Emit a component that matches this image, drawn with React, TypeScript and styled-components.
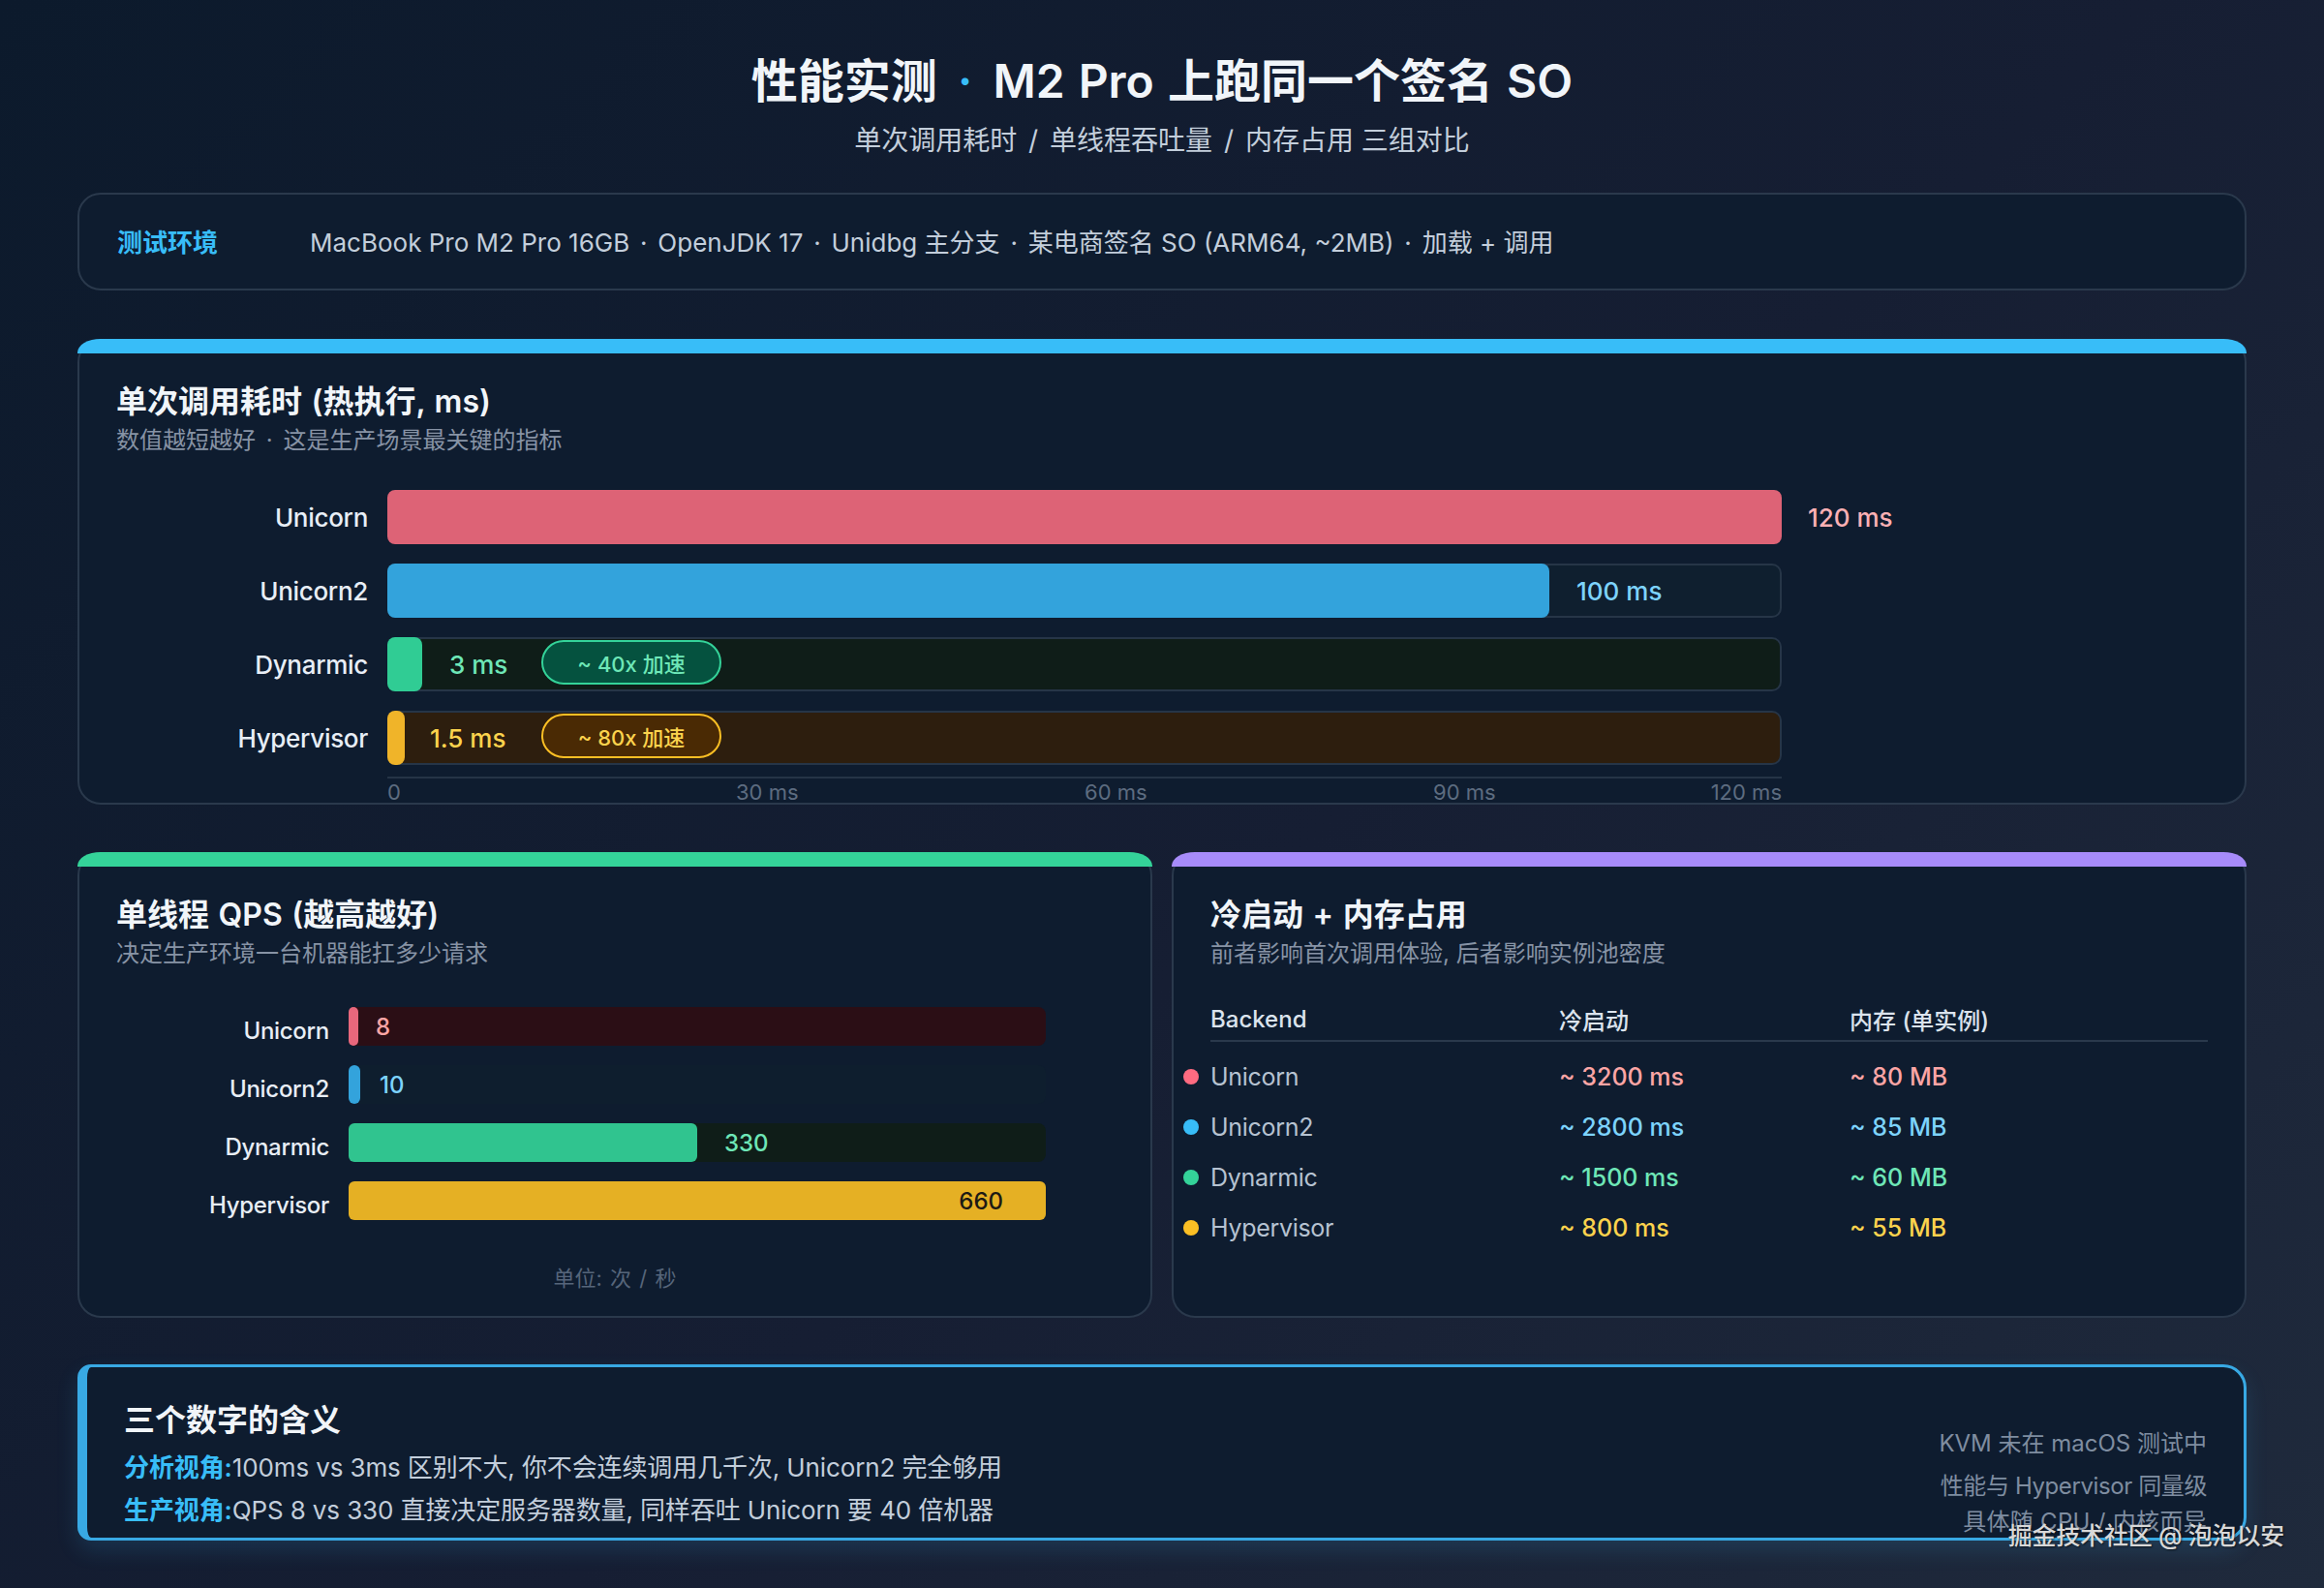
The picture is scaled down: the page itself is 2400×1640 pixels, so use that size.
import React from "react";
import styled, { createGlobalStyle } from "styled-components";

const Global = createGlobalStyle`
  html, body { margin: 0; padding: 0; }
  body {
    width: 2400px;
    height: 1640px;
    overflow: hidden;
    font-family: "Inter", "Noto Sans CJK SC", sans-serif;
    background: linear-gradient(135deg, #0c1a2c 0%, #161e33 55%, #1f2a3c 100%);
  }
`;

const Page = styled.div`
  position: relative;
  box-sizing: border-box;
  width: 2400px;
  height: 1640px;
  padding: 53px 80px 0;
  display: flex;
  flex-direction: column;
`;

const Header = styled.header`
  text-align: center;
  height: 111px;
`;

const Title = styled.h1`
  margin: 0;
  font-size: 48px;
  line-height: 62px;
  font-weight: 600;
  word-spacing: 2px;
  color: #f1f5f9;
`;

const Sep = styled.span<{ $space: number; $color?: string }>`
  margin: 0 ${(p) => p.$space}px;
  color: ${(p) => p.$color ?? "inherit"};
`;

const Subtitle = styled.p`
  margin: 10px 0 0;
  font-size: 28px;
  line-height: 40px;
  font-weight: 400;
  color: #c3cedb;
`;

const EnvCard = styled.section`
  box-sizing: border-box;
  margin-top: 35px;
  height: 101px;
  padding: 0 39px 2px;
  display: flex;
  align-items: center;
  background: #0e1c2f;
  border: 2px solid #2a394c;
  border-radius: 24px;
`;

const EnvLabel = styled.span`
  width: 199px;
  font-size: 26px;
  font-weight: 600;
  color: #38bdf8;
`;

const EnvText = styled.span`
  font-size: 26px;
  color: #c3cedb;
`;

const Card = styled.section<{ $accent: string; $height: number }>`
  position: relative;
  box-sizing: border-box;
  height: ${(p) => p.$height}px;
  padding: 43px 38px 0;
  background: #0e1c2f;
  border: 2px solid #2a394c;
  border-radius: 24px;
  &::before {
    content: "";
    position: absolute;
    left: -2px;
    right: -2px;
    top: -2px;
    height: 15px;
    border-radius: 24px 24px 0 0 / 14px 14px 0 0;
    background: ${(p) => p.$accent};
  }
`;

const WideCard = styled(Card)`
  margin-top: 50px;
`;

const CardTitle = styled.h2`
  margin: 0;
  font-size: 32px;
  line-height: 40px;
  font-weight: 600;
  word-spacing: 1.5px;
  color: #f1f5f9;
`;

const CardSub = styled.p`
  margin: 4px 0 0;
  font-size: 24px;
  line-height: 32px;
  color: #8793a5;
`;

const Chart = styled.div`
  margin-top: 35px;
  display: flex;
  flex-direction: column;
  gap: 20px;
`;

const BarRow = styled.div`
  display: grid;
  grid-template-columns: 260px 1440px auto;
  column-gap: 20px;
  align-items: center;
  height: 56px;
`;

const BarLabel = styled.span`
  text-align: right;
  font-size: 26px;
  letter-spacing: -0.3px;
  font-weight: 500;
  color: #e8eef6;
`;

const Track = styled.div<{ $bg: string; $framed: boolean }>`
  position: relative;
  box-sizing: border-box;
  height: 56px;
  display: flex;
  align-items: center;
  background: ${(p) => p.$bg};
  border: ${(p) => (p.$framed ? "2px solid #263547" : "none")};
  border-radius: 10px;
`;

const Fill = styled.div<{ $color: string; $framed: boolean }>`
  flex: none;
  height: 56px;
  margin-left: ${(p) => (p.$framed ? "-2px" : "0")};
  border-radius: 8px;
  background: ${(p) => p.$color};
`;

const BarValue = styled.span<{ $color: string; $gap: number }>`
  margin-left: ${(p) => p.$gap}px;
  font-size: 26px;
  font-weight: 500;
  color: ${(p) => p.$color};
`;

const Pill = styled.span<{ $bg: string; $border: string; $color: string }>`
  position: absolute;
  left: 157px;
  top: 1px;
  box-sizing: border-box;
  width: 186px;
  height: 46px;
  display: flex;
  align-items: center;
  justify-content: center;
  font-size: 22px;
  font-weight: 500;
  color: ${(p) => p.$color};
  background: ${(p) => p.$bg};
  border: 2px solid ${(p) => p.$border};
  border-radius: 23px;
`;

const Axis = styled.div`
  margin: 12px 0 0 280px;
  width: 1440px;
  border-top: 2px solid #253446;
  display: grid;
  grid-template-columns: repeat(4, 1fr);
  font-size: 22px;
  line-height: 28px;
  color: #5d6c80;
`;

const AxisCell = styled.span`
  display: flex;
  justify-content: space-between;
`;

const Split = styled.div`
  margin-top: 49px;
  display: grid;
  grid-template-columns: 1110px 1110px;
  column-gap: 20px;
`;

const QpsChart = styled.div`
  margin-top: 39px;
  display: flex;
  flex-direction: column;
  gap: 20px;
`;

const QpsRow = styled.div`
  display: grid;
  grid-template-columns: 220px 720px;
  column-gap: 20px;
  height: 40px;
`;

const QpsLabel = styled.span`
  text-align: right;
  font-size: 24px;
  letter-spacing: -0.3px;
  font-weight: 500;
  line-height: 50px;
  color: #e8eef6;
`;

const QpsTrack = styled.div<{ $bg: string }>`
  display: flex;
  align-items: center;
  height: 40px;
  background: ${(p) => p.$bg};
  border-radius: 8px;
`;

const QpsFill = styled.div<{ $color: string }>`
  flex: none;
  display: flex;
  align-items: center;
  justify-content: flex-end;
  box-sizing: border-box;
  height: 40px;
  border-radius: 6px;
  background: ${(p) => p.$color};
`;

const QpsValue = styled.span<{ $color: string; $gap: number }>`
  margin-left: ${(p) => p.$gap}px;
  font-size: 24px;
  font-weight: 500;
  color: ${(p) => p.$color};
`;

const InnerValue = styled.span`
  margin-right: 44px;
  font-size: 24px;
  font-weight: 500;
  color: #1c1a14;
`;

const Unit = styled.p`
  margin: 40px 0 0;
  width: 1030px;
  text-align: center;
  font-size: 22px;
  word-spacing: 2px;
  line-height: 40px;
  color: #56657a;
`;

const Table = styled.div`
  margin-top: 29px;
  width: 1030px;
`;

const THead = styled.div`
  display: grid;
  grid-template-columns: 360px 300px 1fr;
  height: 44px;
  align-items: center;
  border-bottom: 2px solid #2a394c;
  font-size: 24px;
  font-weight: 500;
  color: #dbe3ed;
`;

const TBody = styled.div`
  margin-top: 10px;
`;

const TRow = styled.div`
  position: relative;
  display: grid;
  grid-template-columns: 360px 300px 1fr;
  height: 52px;
  align-items: center;
  font-size: 25px;
`;

const Marker = styled.i<{ $color: string }>`
  position: absolute;
  left: -28px;
  top: 18px;
  width: 16px;
  height: 16px;
  border-radius: 50%;
  background: ${(p) => p.$color};
`;

const Name = styled.span`
  letter-spacing: -0.3px;
  color: #b6c2d1;
`;

const Num = styled.span<{ $color: string }>`
  color: ${(p) => p.$color};
  font-weight: 500;
`;

const Summary = styled.section`
  margin-top: 48px;
  box-sizing: border-box;
  height: 182px;
  display: flex;
  justify-content: space-between;
  padding: 35px 38px 0 38px;
  background: #0e1c2f;
  border: 3px solid #38a9e4;
  border-left-width: 10px;
  border-radius: 14px 24px 24px 14px;
  box-shadow: 0 10px 22px rgba(56, 170, 230, 0.16);
`;

const SummaryTitle = styled.h3`
  margin: 0 0 7px;
  font-size: 32px;
  line-height: 40px;
  font-weight: 600;
  color: #f1f5f9;
`;

const SummaryLine = styled.p`
  margin: 0;
  font-size: 26px;
  letter-spacing: -0.12px;
  line-height: 44px;
  color: #c3cedb;
`;

const Strong = styled.b`
  font-weight: 600;
  color: #38bdf8;
`;

const Notes = styled.div`
  text-align: right;
  padding-top: 22px;
`;

const Note = styled.p<{ $height: number; $track: number }>`
  margin: 0;
  font-size: 24px;
  letter-spacing: ${(p) => p.$track}px;
  line-height: ${(p) => p.$height}px;
  color: #7f8da0;
`;

const Watermark = styled.span`
  position: absolute;
  right: 41px;
  top: 1569px;
  font-size: 25px;
  letter-spacing: -0.2px;
  line-height: 34px;
  font-weight: 500;
  color: #d8d8d8;
  text-shadow: 1px 1px 2px rgba(0, 0, 0, 0.6);
`;

const timing = [
  { name: "Unicorn", w: 1440, fill: "#dd6376", track: "transparent", framed: false, value: "120 ms", color: "#fbb0b4", gap: 28, outside: true },
  { name: "Unicorn2", w: 1200, fill: "#33a3dc", track: "#0f1f2f", framed: true, value: "100 ms", color: "#7dd3fc", gap: 28 },
  { name: "Dynarmic", w: 36, fill: "#30cc94", track: "#0f1d18", framed: true, value: "3 ms", color: "#6ee7b7", gap: 28,
    pill: { text: "~ 40x 加速", bg: "#05523f", border: "#34d399", color: "#6ee7b7" } },
  { name: "Hypervisor", w: 18, fill: "#f0b429", track: "#2d1e0e", framed: true, value: "1.5 ms", color: "#fcd34d", gap: 26,
    pill: { text: "~ 80x 加速", bg: "#4a2a04", border: "#fbbf24", color: "#fcd34d" } },
];

const qps = [
  { name: "Unicorn", w: 10, fill: "#e8677c", track: "#2b0e15", value: "8", color: "#fca5a5", gap: 18 },
  { name: "Unicorn2", w: 12, fill: "#33a3dc", track: "#0e1e2e", value: "10", color: "#7dd3fc", gap: 20 },
  { name: "Dynarmic", w: 360, fill: "#30c48f", track: "#0f1d18", value: "330", color: "#6ee7b7", gap: 28 },
  { name: "Hypervisor", w: 720, fill: "#e5b024", track: "#0e1c2f", inner: "660" },
];

const boot = [
  { name: "Unicorn", dot: "#ff6b81", color: "#fca5a5", cold: "~ 3200 ms", mem: "~ 80 MB" },
  { name: "Unicorn2", dot: "#38bdf8", color: "#7dd3fc", cold: "~ 2800 ms", mem: "~ 85 MB" },
  { name: "Dynarmic", dot: "#34d399", color: "#6ee7b7", cold: "~ 1500 ms", mem: "~ 60 MB" },
  { name: "Hypervisor", dot: "#fbbf24", color: "#fcd34d", cold: "~ 800 ms", mem: "~ 55 MB" },
];

export default function App() {
  return (
    <>
      <Global />
      <Page>
        <Header>
          <Title>
            性能实测 <Sep $space={7} $color="#38bdf8">·</Sep> M2 Pro 上跑同一个签名 SO
          </Title>
          <Subtitle>
            单次调用耗时 <Sep $space={4}>/</Sep> 单线程吞吐量 <Sep $space={4}>/</Sep> 内存占用 三组对比
          </Subtitle>
        </Header>

        <EnvCard>
          <EnvLabel>测试环境</EnvLabel>
          <EnvText>
            MacBook Pro M2 Pro 16GB <Sep $space={3.5}>·</Sep> OpenJDK 17 <Sep $space={3.5}>·</Sep> Unidbg 主分支{" "}
            <Sep $space={3.5}>·</Sep> 某电商签名 SO (ARM64, ~2MB) <Sep $space={3.5}>·</Sep> 加载 + 调用
          </EnvText>
        </EnvCard>

        <WideCard $accent="#38bdf8" $height={481}>
          <CardTitle>单次调用耗时 (热执行, ms)</CardTitle>
          <CardSub>
            数值越短越好 <Sep $space={4}>·</Sep> 这是生产场景最关键的指标
          </CardSub>
          <Chart>
            {timing.map((r) => (
              <BarRow key={r.name}>
                <BarLabel>{r.name}</BarLabel>
                <Track $bg={r.track} $framed={r.framed}>
                  <Fill $color={r.fill} $framed={r.framed} style={{ width: r.w }} />
                  {!r.outside && (
                    <BarValue $color={r.color} $gap={r.gap}>
                      {r.value}
                    </BarValue>
                  )}
                  {r.pill && (
                    <Pill $bg={r.pill.bg} $border={r.pill.border} $color={r.pill.color}>
                      {r.pill.text}
                    </Pill>
                  )}
                </Track>
                {r.outside && (
                  <BarValue $color={r.color} $gap={7}>
                    {r.value}
                  </BarValue>
                )}
              </BarRow>
            ))}
          </Chart>
          <Axis>
            <span>0</span>
            <span>30 ms</span>
            <span>60 ms</span>
            <AxisCell>
              <span>90 ms</span>
              <span>120 ms</span>
            </AxisCell>
          </Axis>
        </WideCard>

        <Split>
          <Card $accent="#34d399" $height={481}>
            <CardTitle>单线程 QPS (越高越好)</CardTitle>
            <CardSub>决定生产环境一台机器能扛多少请求</CardSub>
            <QpsChart>
              {qps.map((r) => (
                <QpsRow key={r.name}>
                  <QpsLabel>{r.name}</QpsLabel>
                  <QpsTrack $bg={r.track}>
                    <QpsFill $color={r.fill} style={{ width: r.w }}>
                      {r.inner && <InnerValue>{r.inner}</InnerValue>}
                    </QpsFill>
                    {r.value && (
                      <QpsValue $color={r.color} $gap={r.gap}>
                        {r.value}
                      </QpsValue>
                    )}
                  </QpsTrack>
                </QpsRow>
              ))}
            </QpsChart>
            <Unit>单位: 次 / 秒</Unit>
          </Card>

          <Card $accent="#a78bfa" $height={481}>
            <CardTitle>冷启动 + 内存占用</CardTitle>
            <CardSub>前者影响首次调用体验, 后者影响实例池密度</CardSub>
            <Table>
              <THead>
                <span>Backend</span>
                <span>冷启动</span>
                <span>内存 (单实例)</span>
              </THead>
              <TBody>
                {boot.map((r) => (
                  <TRow key={r.name}>
                    <Marker $color={r.dot} />
                    <Name>{r.name}</Name>
                    <Num $color={r.color}>{r.cold}</Num>
                    <Num $color={r.color}>{r.mem}</Num>
                  </TRow>
                ))}
              </TBody>
            </Table>
          </Card>
        </Split>

        <Summary>
          <div>
            <SummaryTitle>三个数字的含义</SummaryTitle>
            <SummaryLine>
              <Strong>分析视角:</Strong>100ms vs 3ms 区别不大, 你不会连续调用几千次, Unicorn2 完全够用
            </SummaryLine>
            <SummaryLine>
              <Strong>生产视角:</Strong>QPS 8 vs 330 直接决定服务器数量, 同样吞吐 Unicorn 要 40 倍机器
            </SummaryLine>
          </div>
          <Notes>
            <Note $height={44} $track={0}>KVM 未在 macOS 测试中</Note>
            <Note $height={44} $track={-0.4}>性能与 Hypervisor 同量级</Note>
            <Note $height={30} $track={0.3}>具体随 CPU / 内核而异</Note>
          </Notes>
        </Summary>

        <Watermark>掘金技术社区 @ 泡泡以安</Watermark>
      </Page>
    </>
  );
}
